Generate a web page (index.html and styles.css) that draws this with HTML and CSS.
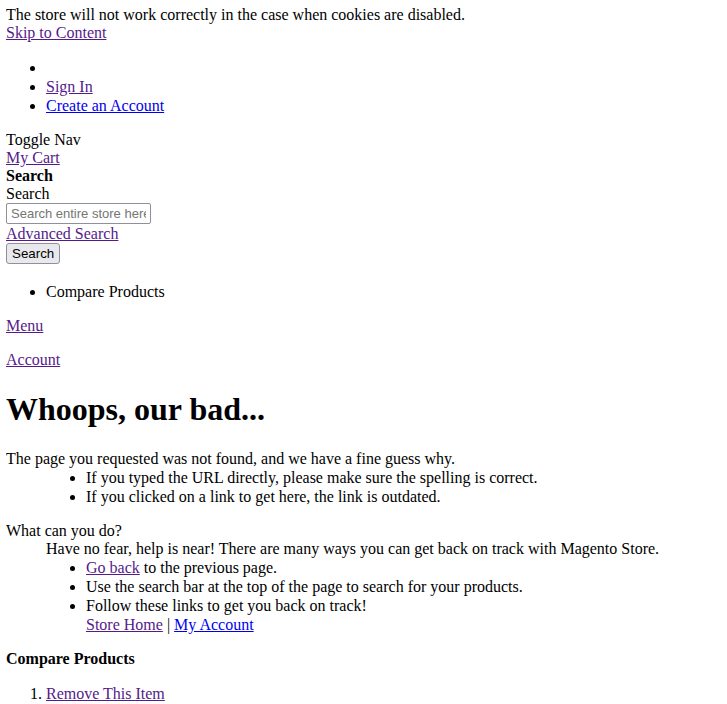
FILE: index.html
```html
<!DOCTYPE html>
<html lang="en">
<head>
  <meta charset="UTF-8" />
  <title>404 Not Found</title>
  <link rel="stylesheet" href="styles.css">
</head>
<body>

<div class="notice">The store will not work correctly in the case when cookies are disabled.</div>
<a class="visto" href="#contentarea">Skip to Content</a>

<ul>
  <li><span class="greet"></span></li>
  <li><a class="visto" href="#">Sign In</a></li>
  <li><a href="#">Create an Account</a></li>
</ul>

<span>Toggle Nav</span><br>
<a class="visto" href="#">My Cart</a>

<div class="block-search">
  <strong>Search</strong>
  <div><label for="search">Search</label></div>
  <input id="search" class="search-input" type="text" placeholder="Search entire store here...">
  <div><a class="visto" href="#">Advanced Search</a></div>
  <button class="search-btn" type="submit">Search</button>
</div>

<ul>
  <li>Compare Products</li>
</ul>

<p class="tab"><a class="visto" href="#">Menu</a></p>
<p class="tab"><a class="visto" href="#">Account</a></p>

<h1 id="contentarea">Whoops, our bad...</h1>

<dl>
  <dt>The page you requested was not found, and we have a fine guess why.</dt>
  <dd>
    <ul>
      <li>If you typed the URL directly, please make sure the spelling is correct.</li>
      <li>If you clicked on a link to get here, the link is outdated.</li>
    </ul>
  </dd>
</dl>

<dl>
  <dt>What can you do?</dt>
  <dd>Have no fear, help is near! There are many ways you can get back on track with Magento Store.</dd>
  <dd>
    <ul>
      <li><a class="visto" href="#">Go back</a> to the previous page.</li>
      <li>Use the search bar at the top of the page to search for your products.</li>
      <li>Follow these links to get you back on track!<br>
        <a class="visto" href="#">Store Home</a> <span class="sep">|</span> <a href="#">My Account</a></li>
    </ul>
  </dd>
</dl>

<div class="compare">
  <strong>Compare Products</strong>
</div>
<ol>
  <li><a class="visto" href="#">Remove This Item</a></li>
</ol>

</body>
</html>
```

FILE: styles.css
```css
body {
  font-family: "Liberation Serif", "Times New Roman", serif;
  font-size: 16px;
  line-height: 18px;
  color: #000;
  margin: 6px 6px 8px;
}

li {
  line-height: 19px;
}

h1 {
  line-height: 38px;
}

a {
  color: #0000ee;
}

a.visto {
  color: #551a8b;
}

.block-search {
  padding-bottom: 2px;
}

.search-input {
  box-sizing: border-box;
  display: block;
  font-family: "Liberation Sans", Arial, sans-serif;
  font-size: 13px;
  width: 145px;
  height: 21px;
  margin: 0 0 1px;
  padding: 0 4px;
  color: #000;
  border: 1px solid #8f8f9d;
  border-radius: 2px;
}

.search-input::placeholder {
  color: #757575;
}

.search-btn {
  box-sizing: border-box;
  display: block;
  font-family: "Liberation Sans", Arial, sans-serif;
  font-size: 13.33px;
  height: 21px;
  padding: 0 5px;
  color: #000;
  background: #e9e9ed;
  border: 1px solid #8f8f9d;
  border-radius: 3px;
}

.tab {
  margin: 16px 0;
}

.compare {
  margin: 16px 0;
}
```
